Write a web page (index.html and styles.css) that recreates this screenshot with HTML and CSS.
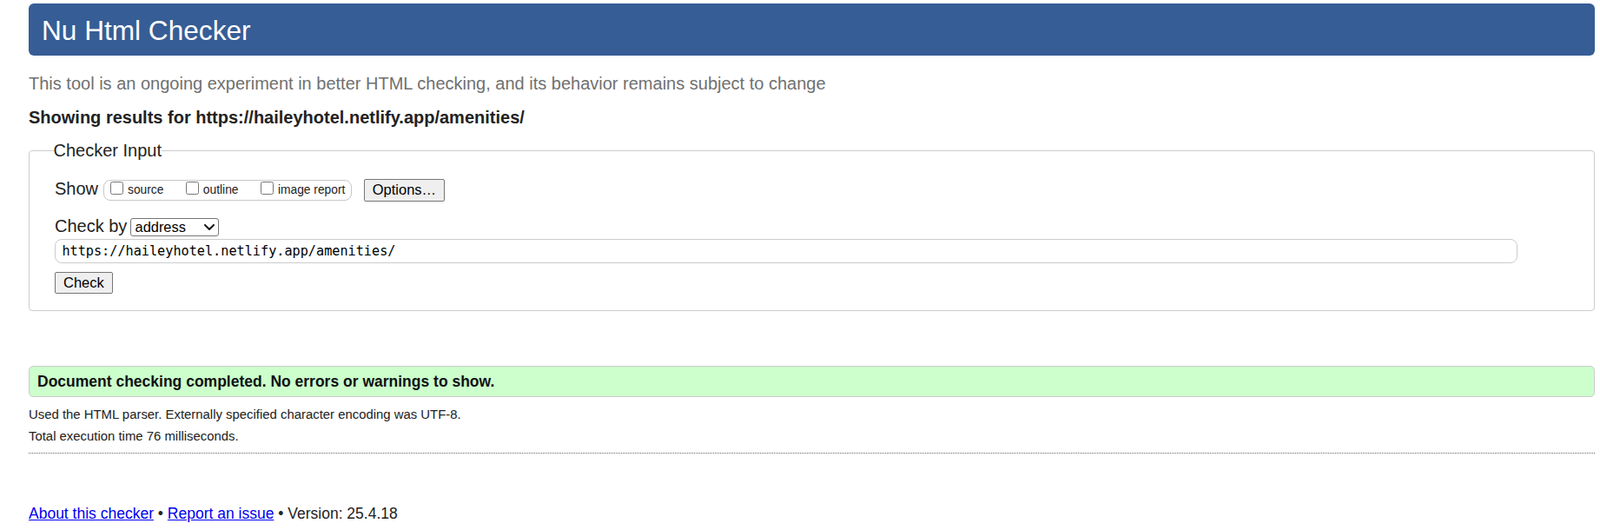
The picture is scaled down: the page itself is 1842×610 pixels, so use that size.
FILE: index.html
```html
<!DOCTYPE html>
<html lang="en">
<head>
<meta charset="utf-8">
<title>Nu Html Checker</title>
<link rel="stylesheet" href="styles.css">
</head>
<body>
<div class="page">
  <h1 class="banner">Nu Html Checker</h1>
  <p class="lead">This tool is an ongoing experiment in better HTML checking, and its behavior remains subject to change</p>
  <p class="showing">Showing results for https://haileyhotel.netlify.app/amenities/</p>
  <form class="input-form">
    <fieldset class="checker">
      <legend class="legend">Checker Input</legend>
      <div class="row show-row">
        <span class="row-label">Show</span>
        <span class="opts">
          <label class="opt"><input type="checkbox" class="cb"><span class="opt-text">source</span></label>
          <label class="opt"><input type="checkbox" class="cb"><span class="opt-text">outline</span></label>
          <label class="opt"><input type="checkbox" class="cb"><span class="opt-text">image report</span></label>
        </span>
        <button type="button" class="btn btn-options">Options…</button>
      </div>
      <div class="row by-row">
        <span class="row-label">Check by</span>
        <span class="select-wrap">
          <select class="select"><option>address</option></select>
          <svg class="chev" width="12" height="7" viewBox="0 0 12 7" aria-hidden="true"><polyline points="1,1 6,6 11,1" fill="none" stroke="#1a1a1a" stroke-width="2" stroke-linecap="round" stroke-linejoin="round"/></svg>
        </span>
      </div>
      <input class="url" type="url" value="https://haileyhotel.netlify.app/amenities/">
      <div class="check-row"><button type="button" class="btn">Check</button></div>
    </fieldset>
  </form>
  <p class="success">Document checking completed. No errors or warnings to show.</p>
  <p class="details">Used the HTML parser. Externally specified character encoding was UTF-8.</p>
  <p class="details details-2">Total execution time 76 milliseconds.</p>
  <hr class="sep">
  <p class="footer"><a class="link" href="#">About this checker</a> • <a class="link" href="#">Report an issue</a> • Version: 25.4.18</p>
</div>
</body>
</html>
```

FILE: styles.css
```css
html, body {
  margin: 0;
  padding: 0;
  background: #ffffff;
}

body {
  font-family: "Liberation Sans", Arial, sans-serif;
  color: #222222;
}

.page {
  padding: 4px 6px 0 33px;
}

.banner {
  margin: 0;
  padding: 13px 15px 10.5px;
  line-height: 36px;
  font-size: 31.6px;
  font-weight: normal;
  color: #ffffff;
  background: #365d95;
  border-radius: 6px;
}

.lead {
  margin: 21.7px 0 0;
  font-size: 20px;
  line-height: 23px;
  color: #707070;
}

.showing {
  margin: 15.4px 0 0;
  font-size: 20px;
  line-height: 23px;
  font-weight: bold;
  color: #222222;
}

.input-form {
  margin: 0;
}

.checker {
  margin: 15.3px 0 0;
  padding: 21px 29px 19px;
  border: 1px solid #cccccc;
  border-radius: 4px;
  min-width: 0;
}

.legend {
  padding: 0;
  margin-left: -1.5px;
  font-size: 20px;
  line-height: 23px;
  color: #222222;
}

.row {
  display: flex;
  align-items: flex-start;
}

.show-row {
  height: 26px;
}

.by-row {
  margin-top: 17px;
}

.row-label {
  font-size: 20px;
  line-height: 23px;
  color: #222222;
}

.opts {
  display: flex;
  align-items: flex-start;
  box-sizing: border-box;
  height: 23.4px;
  margin: 1.4px 0 0 6px;
  padding: 0 7px;
  border: 1px solid #c8c8c8;
  border-radius: 8px;
  gap: 25.4px;
}

.opt {
  display: flex;
  align-items: flex-start;
}

.cb {
  appearance: none;
  -webkit-appearance: none;
  box-sizing: border-box;
  width: 15px;
  height: 15px;
  margin: 0.3px 5px 0 0;
  border: 1px solid #767676;
  border-radius: 2.5px;
  background: #ffffff;
}

.opt-text {
  margin-top: 2.6px;
  font-size: 13.8px;
  line-height: 15.7px;
  color: #222222;
}

.btn {
  display: block;
  box-sizing: border-box;
  height: 25px;
  margin: 0;
  padding: 2px 9px;
  font-family: "Liberation Sans", Arial, sans-serif;
  font-size: 16.5px;
  line-height: 19px;
  color: #000000;
  background: #efefef;
  border: 1px solid #767676;
  border-radius: 2px;
}

.btn-options {
  height: 25.7px;
  margin-left: 13.4px;
}

.select-wrap {
  position: relative;
  display: block;
  margin: 1.8px 0 0 3.2px;
}

.select {
  appearance: none;
  -webkit-appearance: none;
  display: block;
  box-sizing: border-box;
  width: 102.5px;
  height: 21.6px;
  margin: 0;
  padding: 0 0 0 5px;
  font-family: "Liberation Sans", Arial, sans-serif;
  font-size: 16.4px;
  line-height: 19.6px;
  color: #000000;
  background: #ffffff;
  border: 1px solid #767676;
  border-radius: 3px;
}

.chev {
  position: absolute;
  right: 5px;
  top: 7.4px;
  pointer-events: none;
}

.url {
  display: block;
  box-sizing: border-box;
  width: 1684.4px;
  height: 27.7px;
  margin: 2.7px 0 0;
  padding: 0 7.4px;
  font-family: "DejaVu Sans Mono", "Liberation Mono", monospace;
  font-size: 15.2px;
  color: #000000;
  background: #ffffff;
  border: 1px solid #cccccc;
  border-radius: 8px;
}

.check-row {
  margin-top: 10.6px;
}

.success {
  margin: 63px 0 0;
  padding: 7px 9px;
  font-size: 17.5px;
  line-height: 20px;
  font-weight: bold;
  color: #111111;
  background: #ccffcc;
  border: 1px solid #cccccc;
  border-radius: 5px;
}

.details {
  margin: 11.3px 0 0;
  font-size: 14.9px;
  line-height: 17px;
  color: #222222;
}

.details-2 {
  margin-top: 8.7px;
}

.sep {
  margin: 10px 0 0;
  height: 0;
  border: 0;
  border-top: 1px dotted #666666;
}

.footer {
  margin: 59.2px 0 0;
  font-size: 17.5px;
  line-height: 20px;
  color: #222222;
}

.link {
  color: #0000ee;
  text-decoration: underline;
}
```
